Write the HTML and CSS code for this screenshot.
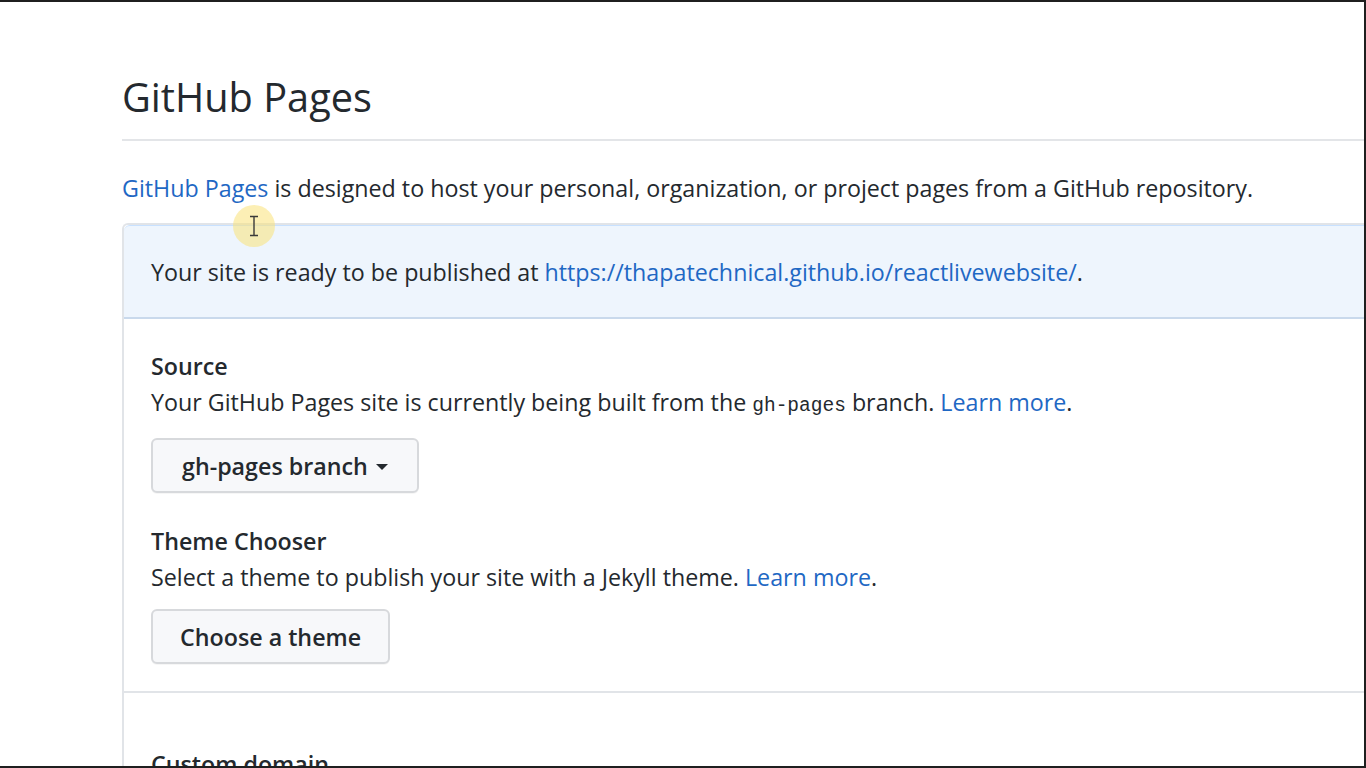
FILE: index.html
```html
<!DOCTYPE html>
<html>
<head>
<meta charset="utf-8">
<link rel="stylesheet" href="styles.css">
<title>GitHub Pages</title>
</head>
<body>
<div class="screen">
  <div class="page">
    <h2 class="subhead">GitHub Pages</h2>
    <p class="intro"><a href="#" class="link">GitHub Pages</a> is designed to host your personal, organization, or project pages from a GitHub repository.</p>
    <div class="box">
      <div class="flash">Your site is ready to be published at <a href="#" class="link">https://thapatechnical.github.io/reactlivewebsite/</a>.</div>
      <div class="box-body">
        <div class="section">
          <h4 class="label">Source</h4>
          <p class="note">Your GitHub Pages site is currently being built from the <code class="code">gh-pages</code> branch. <a href="#" class="link">Learn more</a>.</p>
          <button class="btn btn-first">gh-pages branch <span class="caret"></span></button>
          <h4 class="label label-gap">Theme Chooser</h4>
          <p class="note">Select a theme to publish your site with a Jekyll theme. <a href="#" class="link">Learn more</a>.</p>
          <button class="btn btn-second">Choose a theme</button>
        </div>
        <div class="section section-next">
          <h4 class="label">Custom domain</h4>
        </div>
      </div>
    </div>
  </div>
  <div class="cursor-spot">
    <svg width="12" height="22" viewBox="0 0 12 22"><path d="M2 1.5h8M6 1.5v19M2 20.5h8" stroke="#3a3a3a" stroke-width="1.4" fill="none"/></svg>
  </div>
</div>
</body>
</html>
```

FILE: styles.css
```css
* { box-sizing: border-box; }
html, body { margin: 0; padding: 0; background: #fff; }
body {
  font-family: "Open Sans", "Noto Sans", sans-serif;
  color: #24292e;
}
.screen {
  position: relative;
  width: 1366px;
  height: 768px;
  overflow: hidden;
  border-top: 2px solid #1f1f1f;
  border-right: 2px solid #1f1f1f;
  border-bottom: 2px solid #1f1f1f;
}
.page {
  padding-left: 122px;
  width: 1500px;
}
.subhead {
  margin: 70px 0 0 0;
  font-size: 39.7px;
  font-weight: 400;
  line-height: 50px;
  padding-bottom: 17px;
  border-bottom: 2px solid #e3e5e8;
}
.intro {
  margin: 29px 0 0 0;
  font-size: 23.25px;
  line-height: 36px;
}
.link { color: #1f68c4; text-decoration: none; }
.box {
  margin-top: 17px;
  border: 2px solid #e1e4e8;
  border-radius: 6px 0 0 6px;
  border-right: none;
}
.flash {
  background: #eef5fd;
  border-bottom: 2px solid #c9d9ec;
  border-top: 1px solid #c8e1ff;
  padding: 28px 29px 27px 27px;
  font-size: 23.25px;
  line-height: 36px;
  border-radius: 6px 0 0 0;
  white-space: nowrap;
}
.box-body { padding: 0 0 0 27px; }
.section { padding: 29px 0 27px 0; }
.section-next {
  border-top: 2px solid #e1e4e8;
  margin-left: -27px;
  padding-left: 27px;
  padding-top: 53px;
}
.label {
  margin: 0;
  font-size: 23.25px;
  font-weight: 600;
  line-height: 36px;
}
.label-gap { margin-top: 30px; }
.note {
  margin: 0;
  font-size: 23.25px;
  line-height: 36px;
  white-space: nowrap;
}
.code {
  font-family: "Liberation Mono", monospace;
  font-size: 19.5px;
}
.btn {
  display: flex;
  width: max-content;
  align-items: center;
  gap: 8px;
  height: 55px;
  padding: 0 29px;
  font-family: inherit;
  font-size: 23.25px;
  font-weight: 600;
  color: #24292e;
  background: #f7f8fa;
  border: 2px solid #d7d9dc;
  border-radius: 6px;
  box-shadow: 0 1px 0 rgba(27,31,35,.04);
  white-space: nowrap;
}
.btn-first { margin-top: 14px; }
.btn-second { margin-top: 14px; padding: 0 27px; }
.caret {
  display: inline-block;
  width: 0; height: 0;
  border-left: 6px solid transparent;
  border-right: 6px solid transparent;
  border-top: 6px solid #24292e;
  margin-top: 2px;
}
.cursor-spot {
  position: absolute;
  left: 233px;
  top: 203px;
  width: 42px;
  height: 42px;
  border-radius: 50%;
  background: rgba(250, 225, 120, 0.55);
  display: flex;
  align-items: center;
  justify-content: center;
}
```
